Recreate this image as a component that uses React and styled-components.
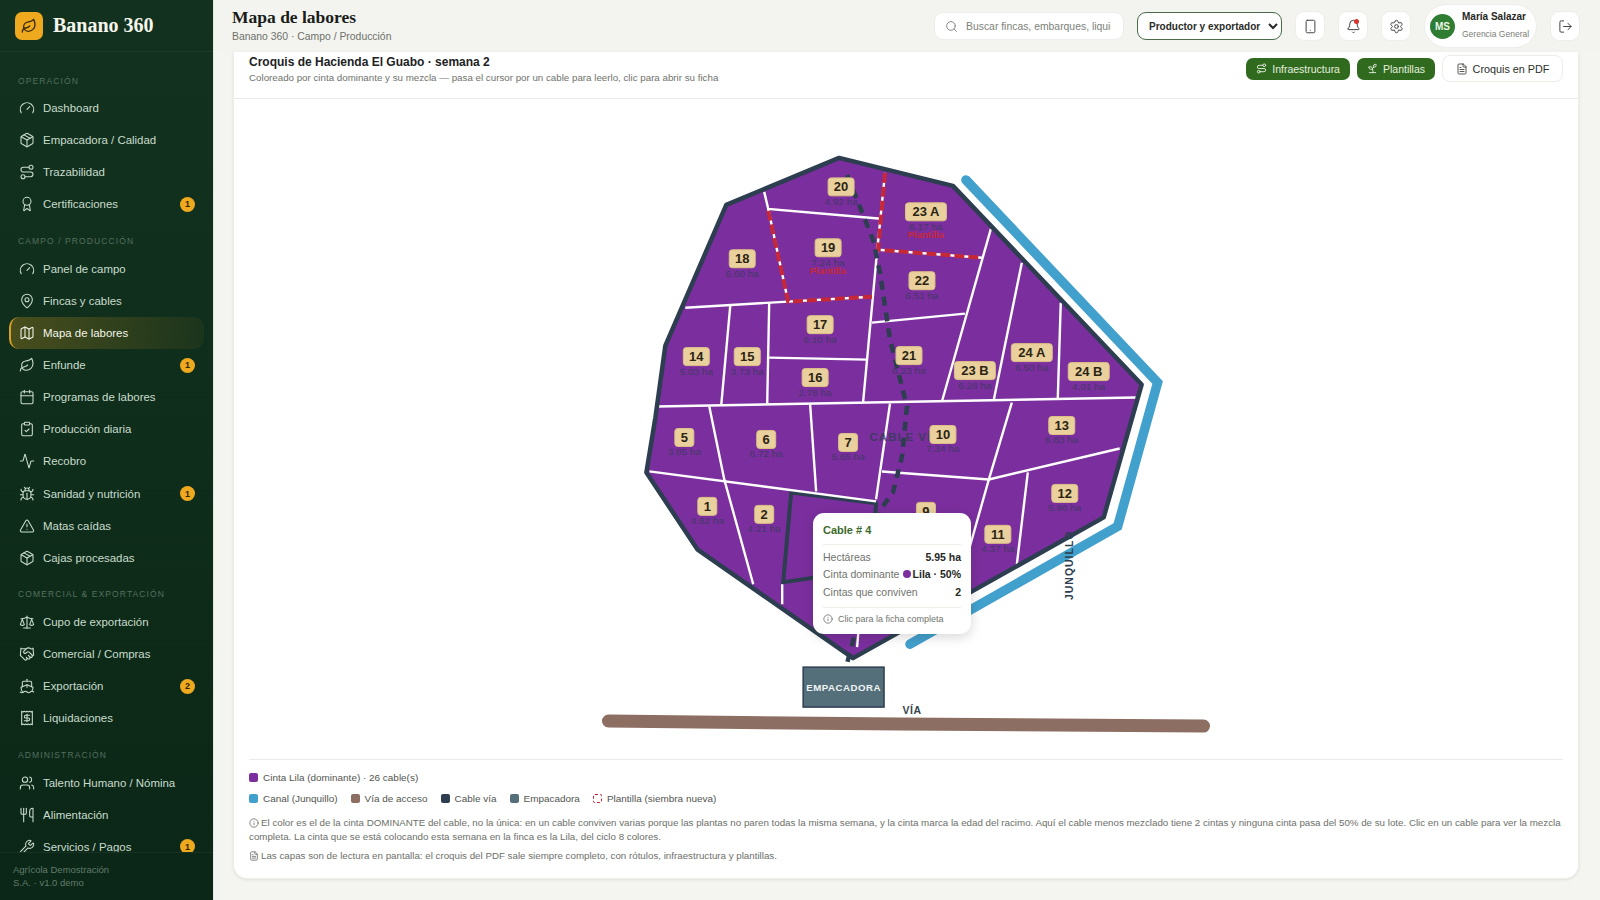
import React from "react";
import styled, { createGlobalStyle } from "styled-components";
import {
  Activity, Award, Bell, Bug, Calendar, ClipboardCheck, FileText, Gauge, Handshake, Info,
  Leaf, LogOut, Map as MapIcon, MapPin, Package, Receipt, Route, Scale, Search, Settings,
  Ship, Smartphone, Sprout, TriangleAlert, Users, Utensils, Wrench,
} from "lucide-react";

const GlobalStyle = createGlobalStyle`
  html, body { margin: 0; height: 100%; overflow: hidden; }
  body { font-family: "Liberation Sans", Arial, sans-serif; background: #f4f5f0; color: #1d1f1c; }
  #root { height: 100%; }
  * { box-sizing: border-box; }
`;

const Shell = styled.div`
  display: flex;
  height: 900px;
`;

/* sidebar */
const Sidebar = styled.aside`
  width: 214px;
  flex-shrink: 0;
  display: flex;
  flex-direction: column;
  background: linear-gradient(180deg, #12321f 0%, #0f2d1b 50%, #0b2717 100%);
  border-right: 1px solid #e4e7e0;
`;

const Brand = styled.div`
  height: 52px;
  flex-shrink: 0;
  display: flex;
  align-items: center;
  gap: 10px;
  padding: 0 15px;
  border-bottom: 1px solid rgba(255, 255, 255, 0.05);
`;

const BrandMark = styled.div`
  width: 28px;
  height: 28px;
  border-radius: 7px;
  background: #eea91f;
  color: #3a2a08;
  display: flex;
  align-items: center;
  justify-content: center;
`;

const BrandName = styled.div`
  font-family: "Liberation Serif", Georgia, serif;
  font-weight: 700;
  font-size: 20px;
  color: #f6f5ec;
`;

const Nav = styled.nav`
  flex: 1;
  overflow: hidden;
  padding: 0 9px;
`;

const SectionTitle = styled.div`
  height: 14px;
  margin-top: ${(p) => (p.$first ? "22px" : "13px")};
  margin-bottom: ${(p) => (p.$first ? "4px" : "5px")};
  padding-left: 9px;
  line-height: 14px;
  font-size: 8.5px;
  letter-spacing: 1.1px;
  color: #54705f;
`;

const NavItem = styled.div`
  position: relative;
  height: 32.15px;
  display: flex;
  align-items: center;
  gap: 8px;
  padding-left: 8px;
  padding-right: 9px;
  font-size: 11.45px;
  color: ${(p) => (p.$active ? "#f3f5ea" : "#c9dccd")};
  border-radius: 10px;
  background: ${(p) =>
    p.$active ? "linear-gradient(90deg, rgba(238,169,31,0.26), rgba(238,169,31,0.05))" : "none"};
  border-left: 2px solid ${(p) => (p.$active ? "#d9a021" : "transparent")};
  svg { flex-shrink: 0; }
`;

const NavLabel = styled.span`
  flex: 1;
  white-space: nowrap;
`;

const Badge = styled.span`
  width: 15px;
  height: 15px;
  margin-left: -1px;
  border-radius: 50%;
  background: #eea91f;
  color: #33260a;
  font-size: 9px;
  font-weight: 700;
  display: flex;
  align-items: center;
  justify-content: center;
`;

const SideFooter = styled.div`
  height: 48px;
  flex-shrink: 0;
  padding: 10px 100px 0 13px;
  font-size: 9.5px;
  line-height: 13px;
  color: #627c6b;
  background: #0b2717;
  border-top: 1px solid rgba(255, 255, 255, 0.05);
`;

/* top bar */
const Main = styled.main`
  flex: 1;
  min-width: 0;
  display: flex;
  flex-direction: column;
`;

const Topbar = styled.header`
  height: 52px;
  flex-shrink: 0;
  display: flex;
  align-items: center;
  padding: 0 20px 0 18px;
  background: #f3f4ef;
`;

const TitleBlock = styled.div`
  flex: 1;
  margin-top: -2px;
`;

const PageTitle = styled.h1`
  margin: 0 0 4px;
  font-family: "Liberation Serif", Georgia, serif;
  font-size: 17.5px;
  line-height: 19px;
  font-weight: 700;
  color: #1a1c19;
`;

const Crumb = styled.div`
  font-size: 10.4px;
  line-height: 12px;
  color: #6d716b;
`;

const SearchBox = styled.label`
  width: 190px;
  height: 28px;
  display: flex;
  align-items: center;
  gap: 8px;
  padding: 0 12px 0 10px;
  background: #fff;
  border: 1px solid #edeee9;
  border-radius: 9px;
  color: #777;
`;

const SearchInput = styled.input`
  flex: 1;
  min-width: 0;
  border: 0;
  outline: 0;
  padding: 0;
  background: none;
  font: 10.4px "Liberation Sans", Arial, sans-serif;
  &::placeholder { color: #7d7f7a; opacity: 1; }
`;

const RoleSelect = styled.select`
  width: 145px;
  height: 28px;
  margin-left: 13px;
  padding: 0 0 0 7px;
  background: #fff;
  border: 1px solid #4a6a4a;
  border-radius: 9px;
  font: 700 10px "Liberation Sans", Arial, sans-serif;
  color: #2a2c28;
`;

const IconButton = styled.button`
  position: relative;
  width: 30px;
  height: 30px;
  margin-left: ${(p) => p.$gap || 13}px;
  padding: 0;
  display: flex;
  align-items: center;
  justify-content: center;
  background: #fff;
  border: 1px solid #edeee9;
  border-radius: 9px;
  color: #444;
`;

const Dot = styled.span`
  position: absolute;
  top: 7px;
  right: 8px;
  width: 5px;
  height: 5px;
  border-radius: 50%;
  background: #d9352f;
`;

const UserPill = styled.div`
  width: 113px;
  height: 44px;
  margin-left: 13px;
  display: flex;
  align-items: center;
  gap: 7px;
  padding-left: 5px;
  background: #fff;
  border: 1px solid #edeee9;
  border-radius: 22px;
`;

const Avatar = styled.div`
  width: 25px;
  height: 25px;
  border-radius: 50%;
  background: #2e7d32;
  color: #eaf5e8;
  font-size: 10px;
  font-weight: 700;
  display: flex;
  align-items: center;
  justify-content: center;
`;

const UserName = styled.div`
  font-size: 10px;
  line-height: 12px;
  font-weight: 700;
  color: #262824;
  margin-bottom: 6px;
  margin-top: -2px;
`;

const UserRole = styled.div`
  font-size: 8.5px;
  line-height: 10px;
  color: #7b7e78;
  white-space: nowrap;
`;

/* card */
const Content = styled.div`
  flex: 1;
  min-height: 0;
  padding: 0 21px 21px 19px;
`;

const Card = styled.section`
  height: 100%;
  display: flex;
  flex-direction: column;
  background: #fff;
  border: 1px solid #eceee8;
  border-top: 0;
  border-radius: 0 0 14px 14px;
  box-shadow: 0 1px 3px rgba(30, 40, 30, 0.1);
`;

const CardHead = styled.div`
  height: 47px;
  flex-shrink: 0;
  display: flex;
  align-items: center;
  gap: 7px;
  padding: 0 15px 13px;
  border-bottom: 1px solid #e9ebe6;
`;

const CardTitles = styled.div`
  flex: 1;
  margin-top: 2px;
`;

const CardTitle = styled.div`
  font-size: 12px;
  line-height: 15px;
  font-weight: 700;
  color: #20221f;
  margin-bottom: 1px;
`;

const CardSub = styled.div`
  font-size: 9.75px;
  line-height: 13px;
  color: #6f726c;
`;

const LayerButton = styled.button`
  height: 22px;
  display: flex;
  align-items: center;
  gap: 5px;
  padding: 0 10px;
  border: 0;
  border-radius: 7px;
  background: #2f6a1f;
  color: #e7f0df;
  font: 10.5px "Liberation Sans", Arial, sans-serif;
`;

const PdfButton = styled.button`
  height: 27px;
  width: 121px;
  display: flex;
  align-items: center;
  justify-content: center;
  gap: 5px;
  background: #fff;
  border: 1px solid #eceee8;
  border-radius: 8px;
  color: #2c2e2a;
  font: 10.8px "Liberation Sans", Arial, sans-serif;
`;

const MapArea = styled.div`
  position: relative;
  flex: 1;
  min-height: 0;
  svg { display: block; }
`;

const PlotTag = styled.rect`
  fill: #e9d09c;
  stroke: #dcc186;
  stroke-width: 1;
`;

const PlotName = styled.text`
  font-family: "Liberation Sans", Arial, sans-serif;
  font-size: 13px;
  font-weight: 700;
  fill: #2b2414;
  text-anchor: middle;
`;

const PlotArea = styled.text`
  font-family: "Liberation Sans", Arial, sans-serif;
  font-size: 10px;
  fill: #2c3e50;
  opacity: 0.7;
  text-anchor: middle;
`;

const PlotNote = styled.text`
  font-family: "Liberation Sans", Arial, sans-serif;
  font-size: 9.5px;
  font-weight: 700;
  fill: #c62838;
  text-anchor: middle;
`;

const MapText = styled.text`
  font-family: "Liberation Sans", Arial, sans-serif;
  font-size: ${(p) => p.$size || 11}px;
  font-weight: 700;
  letter-spacing: ${(p) => p.$spacing || 0.5}px;
  fill: ${(p) => p.$color || "#2c3e50"};
  opacity: ${(p) => p.$opacity || 1};
  text-anchor: middle;
`;

const Tooltip = styled.div`
  position: absolute;
  left: 579px;
  top: 414px;
  width: 158px;
  height: 121px;
  padding: 11px 10px 0;
  background: #fff;
  border-radius: 11px;
  box-shadow: 0 3px 12px rgba(20, 30, 20, 0.18);
`;

const TipTitle = styled.div`
  font-size: 11px;
  line-height: 13px;
  font-weight: 700;
  color: #3c6a2c;
  padding-bottom: 7px;
  border-bottom: 1px solid #eceee8;
  margin-bottom: 3px;
`;

const TipRow = styled.div`
  height: 17.5px;
  display: flex;
  align-items: center;
  justify-content: space-between;
  font-size: 10.5px;
  color: #70736d;
`;

const TipValue = styled.span`
  display: flex;
  align-items: center;
  gap: 2px;
  font-weight: 700;
  color: #262824;
`;

const TipDot = styled.i`
  width: 8px;
  height: 8px;
  border-radius: 50%;
  background: #7b2f9e;
`;

const TipFoot = styled.div`
  display: flex;
  align-items: center;
  gap: 5px;
  margin-top: 6px;
  padding-top: 6px;
  border-top: 1px solid #eceee8;
  font-size: 9px;
  color: #70736d;
`;

const Legend = styled.div`
  flex-shrink: 0;
  height: 119px;
  margin: 0 15px;
  padding-top: 7px;
  border-top: 1px solid #e9ebe6;
`;

const LegendRow = styled.div`
  display: flex;
  gap: 13px;
  height: 21px;
  align-items: center;
  font-size: 9.95px;
  color: #52554f;
`;

const LegendItem = styled.span`
  display: flex;
  align-items: center;
  gap: 5px;
`;

const Swatch = styled.i`
  width: 9px;
  height: 9px;
  border-radius: 2px;
  background: ${(p) => p.$color};
`;

const DashedSwatch = styled.i`
  width: 9px;
  height: 9px;
  border-radius: 2px;
  border: 1.5px dashed #c62838;
`;

const Note = styled.p`
  margin: ${(p) => p.$top || 0}px 0 0;
  font-size: 9.75px;
  line-height: 14px;
  color: #6d706a;
  svg { vertical-align: -2px; margin-right: 2px; }
`;

const NAV = [
  { title: "OPERACIÓN", items: [
    ["Dashboard", Gauge], ["Empacadora / Calidad", Package], ["Trazabilidad", Route], ["Certificaciones", Award, 1],
  ] },
  { title: "CAMPO / PRODUCCIÓN", items: [
    ["Panel de campo", Gauge], ["Fincas y cables", MapPin], ["Mapa de labores", MapIcon], ["Enfunde", Leaf, 1],
    ["Programas de labores", Calendar], ["Producción diaria", ClipboardCheck], ["Recobro", Activity],
    ["Sanidad y nutrición", Bug, 1], ["Matas caídas", TriangleAlert], ["Cajas procesadas", Package],
  ] },
  { title: "COMERCIAL & EXPORTACIÓN", items: [
    ["Cupo de exportación", Scale], ["Comercial / Compras", Handshake], ["Exportación", Ship, 2], ["Liquidaciones", Receipt],
  ] },
  { title: "ADMINISTRACIÓN", items: [
    ["Talento Humano / Nómina", Users], ["Alimentación", Utensils], ["Servicios / Pagos", Wrench, 1],
  ] },
];

// the map is drawn in page coordinates, the viewBox starts where MapArea starts
const OUTLINE = "839,158 953,186 1142,385 1104,518 853,659 697,550 646,473 655,418 665,346 726,205";
const CANAL = "966,180 1158,383 1118,527 910,645";
const CABLE_VIA = "847,175 857,200 873,240 880,273 887,320 890,340 907,407 902,457 893,493 882,508 854,638 847,664";

const WHITE_LINES = [
  "764,192 768,209 881,219", "768,209 788,302", "685,308 872,297", "885,173 877,252 863,403",
  "878,250 982,258", "872,323 965,314", "991,229 942,402", "1022,263 994,400", "1061,303 1058,399",
  "730,306 721,405", "769,303 767,404", "769,358 867,360", "656,407 1136,398",
  "709,407 724,480 753,585", "810,405 816,492", "890,404 876,500", "649,472 876,502",
  "882,472 989,480 1120,449", "1012,403 989,480 955,600", "1028,473 1017,565",
  "782,585 782,605", "857,648 859,625",
];
const RED_LINES = ["885,173 878,250 982,258", "768,211 788,302 872,297"];

const PLOTS = [
  ["20", 841, 187, "4.92 ha"], ["23 A", 926, 212, "6.17 ha", true], ["19", 828, 248, "7.24 ha", true],
  ["18", 742, 259, "6.60 ha"], ["22", 922, 281, "6.51 ha"], ["17", 820, 325, "6.10 ha"],
  ["14", 696, 357, "5.03 ha"], ["15", 747, 357, "3.73 ha"], ["16", 815, 378, "2.78 ha"],
  ["21", 909, 356, "6.23 ha"], ["23 B", 975, 371, "6.28 ha"], ["24 A", 1032, 353, "6.50 ha"],
  ["24 B", 1089, 372, "4.01 ha"], ["13", 1062, 426, "6.83 ha"], ["12", 1065, 494, "5.96 ha"],
  ["11", 998, 535, "4.37 ha"], ["10", 943, 435, "7.34 ha"], ["9", 926, 512, ""],
  ["5", 684, 438, "3.85 ha"], ["6", 766, 440, "6.72 ha"], ["7", 848, 443, "5.65 ha"],
  ["1", 707, 507, "4.62 ha"], ["2", 764, 515, "4.21 ha"],
];

const Plot = ({ name, x, y, area, planted }) => {
  const w = name.length > 2 ? 41 : name.length > 1 ? 26 : 19;
  return (
    <g>
      <PlotTag x={x - w / 2} y={y - 9} width={w} height={18} rx={3} />
      <PlotName x={x} y={y + 4.5}>{name}</PlotName>
      <PlotArea x={x} y={y + 18}>{area}</PlotArea>
      {planted && <PlotNote x={x} y={y + 26}>Plantilla</PlotNote>}
    </g>
  );
};

const CroquisMap = () => (
  <svg width="100%" height="100%" viewBox="234 99 1344 661">
    <polygon points={OUTLINE} fill="#7b2f9e" />
    <polygon points="791,493 876,504 872,570 783,583" fill="none" stroke="#2c3e50" strokeWidth="4" />
    {WHITE_LINES.map((pts) => (
      <polyline key={pts} points={pts} fill="none" stroke="#fff" strokeWidth="2.4" />
    ))}
    {RED_LINES.map((pts) => (
      <polyline key={pts} points={pts} fill="none" stroke="#c62838" strokeWidth="4" strokeDasharray="10 4" />
    ))}
    <polyline points={CABLE_VIA} fill="none" stroke="#2c3e50" strokeWidth="4.5" strokeDasharray="9 7" />
    <polygon points={OUTLINE} fill="none" stroke="#2c3e50" strokeWidth="4.5" strokeLinejoin="round" />
    <polyline points={CANAL} fill="none" stroke="#42a0cd" strokeWidth="9.5" strokeLinecap="round" />
    <polyline points="608,722 900,725 1204,727" fill="none" stroke="#8d6e63" strokeWidth="13" strokeLinecap="round" />
    <rect x="803" y="668" width="81" height="40" fill="#546e7a" stroke="#2c3e50" strokeWidth="1.5" />
    <MapText x="843.5" y="691.5" $size={9.7} $color="#f1f5f5">EMPACADORA</MapText>
    <MapText x="912" y="715" $size={10.5} $color="#37454c">VÍA</MapText>
    <MapText x="905" y="442" $size={11.5} $spacing={1} $opacity={0.75}>CABLE VÍA</MapText>
    <MapText x="0" y="0" $size={10.5} $spacing={1} $color="#2c3e50" transform="translate(1073 566) rotate(-90)">JUNQUILLO</MapText>
    {PLOTS.map(([name, x, y, area, planted]) => (
      <Plot key={name} name={name} x={x} y={y} area={area} planted={planted} />
    ))}
  </svg>
);

const App = () => (
  <Shell>
    <GlobalStyle />
    <Sidebar>
      <Brand>
        <BrandMark><Leaf size={16} /></BrandMark>
        <BrandName>Banano 360</BrandName>
      </Brand>
      <Nav>
        {NAV.map((section, i) => (
          <div key={section.title}>
            <SectionTitle $first={i === 0}>{section.title}</SectionTitle>
            {section.items.map(([label, Icon, badge]) => (
              <NavItem key={label + section.title} $active={label === "Mapa de labores"}>
                <Icon size={16} strokeWidth={1.6} />
                <NavLabel>{label}</NavLabel>
                {badge && <Badge>{badge}</Badge>}
              </NavItem>
            ))}
          </div>
        ))}
      </Nav>
      <SideFooter>Agrícola Demostración S.A. · v1.0 demo</SideFooter>
    </Sidebar>
    <Main>
      <Topbar>
        <TitleBlock>
          <PageTitle>Mapa de labores</PageTitle>
          <Crumb>Banano 360 · Campo / Producción</Crumb>
        </TitleBlock>
        <SearchBox>
          <Search size={13} strokeWidth={1.6} />
          <SearchInput placeholder="Buscar fincas, embarques, liquidaciones..." />
        </SearchBox>
        <RoleSelect defaultValue="both">
          <option value="both">Productor y exportador</option>
        </RoleSelect>
        <IconButton><Smartphone size={15} strokeWidth={1.6} /></IconButton>
        <IconButton><Bell size={15} strokeWidth={1.6} /><Dot /></IconButton>
        <IconButton><Settings size={15} strokeWidth={1.6} /></IconButton>
        <UserPill>
          <Avatar>MS</Avatar>
          <div>
            <UserName>María Salazar</UserName>
            <UserRole>Gerencia General</UserRole>
          </div>
        </UserPill>
        <IconButton><LogOut size={15} strokeWidth={1.6} /></IconButton>
      </Topbar>
      <Content>
        <Card>
          <CardHead>
            <CardTitles>
              <CardTitle>Croquis de Hacienda El Guabo · semana 2</CardTitle>
              <CardSub>Coloreado por cinta dominante y su mezcla — pasa el cursor por un cable para leerlo, clic para abrir su ficha</CardSub>
            </CardTitles>
            <LayerButton><Route size={11} />Infraestructura</LayerButton>
            <LayerButton><Sprout size={11} />Plantillas</LayerButton>
            <PdfButton><FileText size={12} strokeWidth={1.6} />Croquis en PDF</PdfButton>
          </CardHead>
          <MapArea>
            <CroquisMap />
            <Tooltip>
              <TipTitle>Cable # 4</TipTitle>
              <TipRow>Hectáreas<TipValue>5.95 ha</TipValue></TipRow>
              <TipRow>Cinta dominante<TipValue><TipDot />Lila · 50%</TipValue></TipRow>
              <TipRow>Cintas que conviven<TipValue>2</TipValue></TipRow>
              <TipFoot><Info size={10} />Clic para la ficha completa</TipFoot>
            </Tooltip>
          </MapArea>
          <Legend>
            <LegendRow><LegendItem><Swatch $color="#7b2f9e" />Cinta Lila (dominante) · 26 cable(s)</LegendItem></LegendRow>
            <LegendRow>
              <LegendItem><Swatch $color="#42a0cd" />Canal (Junquillo)</LegendItem>
              <LegendItem><Swatch $color="#8d6e63" />Vía de acceso</LegendItem>
              <LegendItem><Swatch $color="#2c3e50" />Cable vía</LegendItem>
              <LegendItem><Swatch $color="#546e7a" />Empacadora</LegendItem>
              <LegendItem><DashedSwatch />Plantilla (siembra nueva)</LegendItem>
            </LegendRow>
            <Note $top={7}>
              <Info size={10} />El color es el de la cinta DOMINANTE del cable, no la única: en un cable conviven varias porque las plantas no paren todas la misma semana, y la cinta marca la edad del racimo. Aquí el cable menos mezclado tiene 2 cintas y ninguna cinta pasa del 50% de su lote. Clic en un cable para ver la mezcla completa. La cinta que se está colocando esta semana en la finca es la Lila, del ciclo 8 colores.
            </Note>
            <Note $top={5}>
              <FileText size={10} />Las capas son de lectura en pantalla: el croquis del PDF sale siempre completo, con rótulos, infraestructura y plantillas.
            </Note>
          </Legend>
        </Card>
      </Content>
    </Main>
  </Shell>
);

export default App;
